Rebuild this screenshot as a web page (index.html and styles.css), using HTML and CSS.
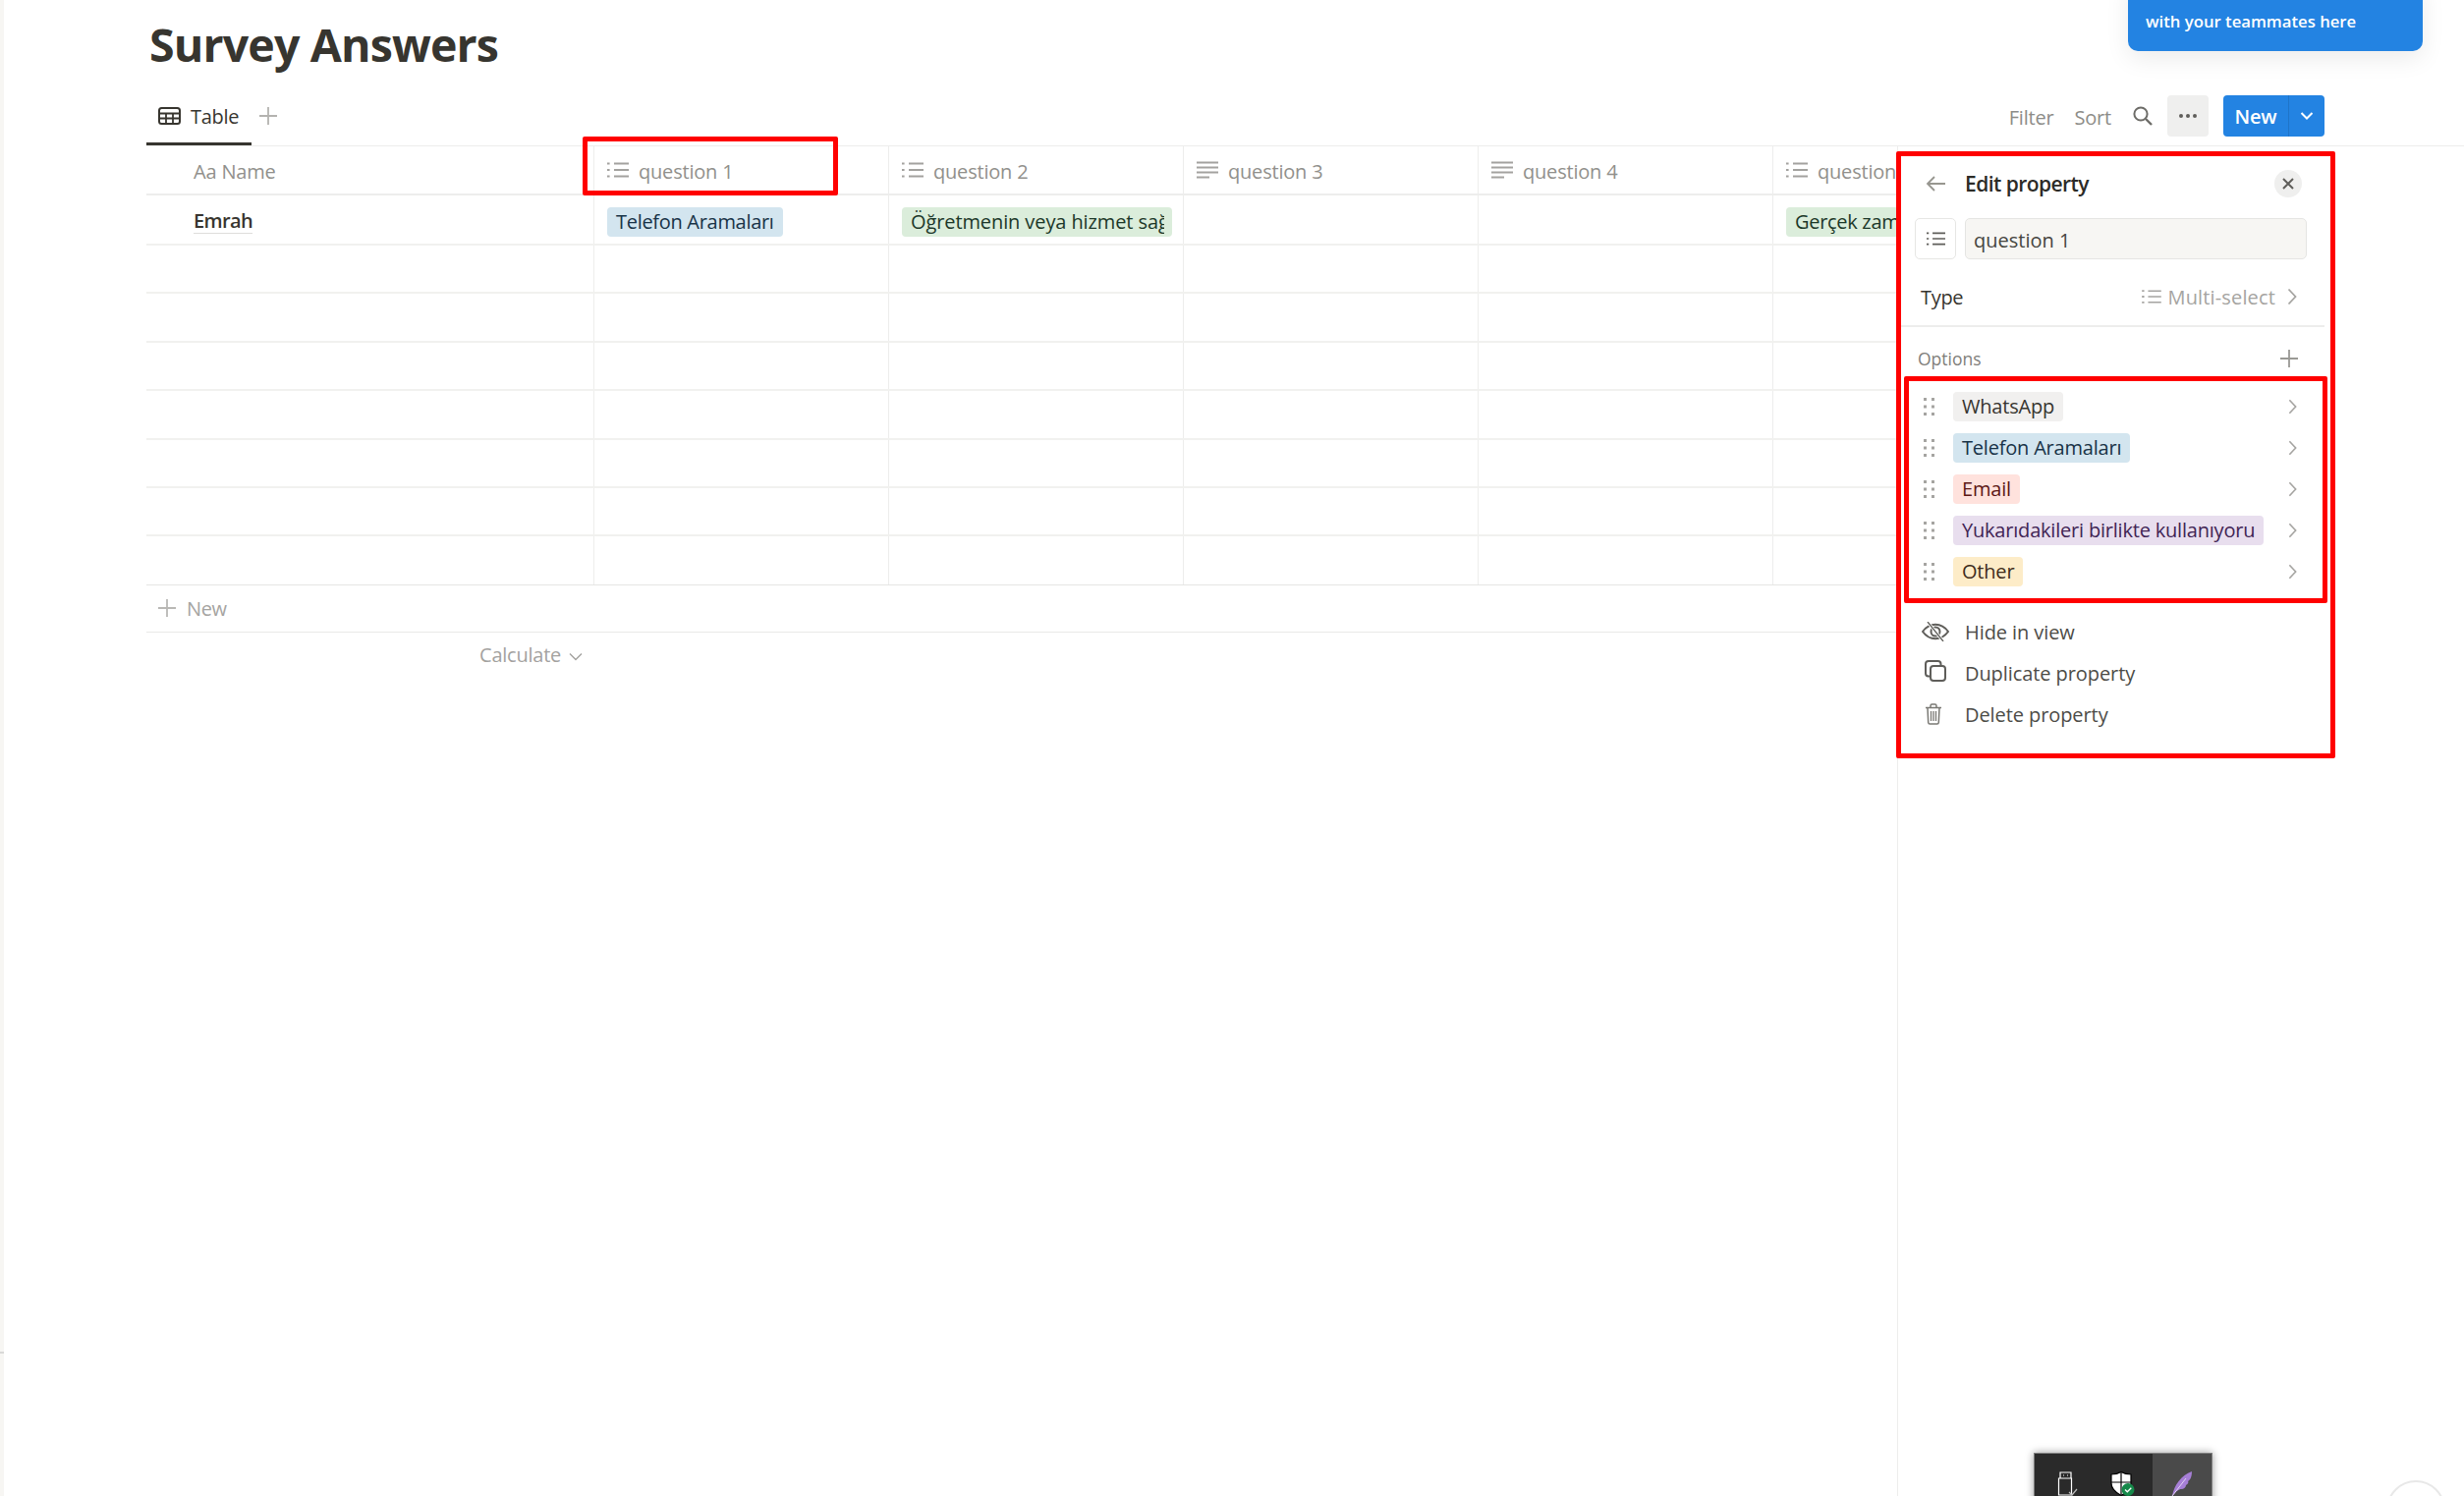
FILE: index.html
```html
<!DOCTYPE html>
<html lang="en">
<head>
<meta charset="utf-8">
<title>Survey Answers</title>
<link rel="stylesheet" href="styles.css">
</head>
<body>
<svg class="defs" width="0" height="0" aria-hidden="true">
  <defs>
    <symbol id="i-list" viewBox="0 0 22 18">
      <path d="M7 2.5h15M7 9h15M7 15.5h15" fill="none" stroke="currentColor" stroke-width="1.8"/>
      <path d="M0 1.5h2.6v2H0zM0 8h2.6v2H0zM0 14.5h2.6v2H0z" fill="currentColor"/>
    </symbol>
    <symbol id="i-text" viewBox="0 0 22 18">
      <path d="M0 1.5h22M0 6.5h22M0 11.5h22M0 16.5h13" fill="none" stroke="currentColor" stroke-width="2"/>
    </symbol>
    <symbol id="i-chev" viewBox="0 0 10 18">
      <path d="M1.5 1.5 8.5 9l-7 7.5" fill="none" stroke="currentColor" stroke-width="1.8"/>
    </symbol>
    <symbol id="i-dots" viewBox="0 0 11 18">
      <path d="M0 0h3v3H0zM8 0h3v3H8zM0 7.5h3v3H0zM8 7.5h3v3H8zM0 15h3v3H0zM8 15h3v3H8z" fill="currentColor"/>
    </symbol>
    <symbol id="i-plus" viewBox="0 0 18 18">
      <path d="M9 0v18M0 9h18" fill="none" stroke="currentColor" stroke-width="1.8"/>
    </symbol>
  </defs>
</svg>

<div class="shell">
  <aside class="rail"><span class="rail-tick"></span></aside>

  <main class="main">
    <h1 class="title">Survey Answers</h1>

    <div class="viewbar">
      <div class="tab">
        <svg class="tab-icon" viewBox="0 0 23 18"><rect x="1" y="1" width="21" height="16" rx="2.5" fill="none" stroke="currentColor" stroke-width="2"/><path d="M1 6.5h21M1 11.5h21M8 6v11M15 6v11" stroke="currentColor" stroke-width="1.8"/></svg>
        <span class="tab-label">Table</span>
      </div>
      <svg class="tab-plus"><use href="#i-plus"/></svg>
      <div class="tools">
        <span class="tool">Filter</span>
        <span class="tool">Sort</span>
        <svg class="search" viewBox="0 0 20 20"><circle cx="8" cy="8" r="6.6" fill="none" stroke="currentColor" stroke-width="2"/><path d="m13 13 6 6" stroke="currentColor" stroke-width="2.4"/></svg>
        <span class="more"><i></i><i></i><i></i></span>
        <span class="new">
          <span class="new-label">New</span>
          <span class="new-drop"><svg viewBox="0 0 14 10"><path d="m1.5 2 5.5 5.500L12.500 2" fill="none" stroke="currentColor" stroke-width="2"/></svg></span>
        </span>
      </div>
    </div>

    <div class="table">
      <div class="row head">
        <div class="cell name"><span class="aa">Aa</span> Name</div>
        <div class="cell"><svg class="col-icon"><use href="#i-list"/></svg>question 1</div>
        <div class="cell"><svg class="col-icon"><use href="#i-list"/></svg>question 2</div>
        <div class="cell"><svg class="col-icon"><use href="#i-text"/></svg>question 3</div>
        <div class="cell"><svg class="col-icon"><use href="#i-text"/></svg>question 4</div>
        <div class="cell"><svg class="col-icon"><use href="#i-list"/></svg>question 5</div>
      </div>
      <div class="row first">
        <div class="cell name"><span class="emrah">Emrah</span></div>
        <div class="cell tagcell"><span class="tag blue">Telefon Aramaları</span></div>
        <div class="cell tagcell"><span class="tag green wide"><span class="clip">Öğretmenin veya hizmet sağlayıcının</span></span></div>
        <div class="cell"></div>
        <div class="cell"></div>
        <div class="cell tagcell"><span class="tag green">Gerçek zamanlı</span></div>
      </div>
      <div class="row blank"><div class="cell name"></div><div class="cell"></div><div class="cell"></div><div class="cell"></div><div class="cell"></div><div class="cell"></div></div>
      <div class="row blank"><div class="cell name"></div><div class="cell"></div><div class="cell"></div><div class="cell"></div><div class="cell"></div><div class="cell"></div></div>
      <div class="row blank"><div class="cell name"></div><div class="cell"></div><div class="cell"></div><div class="cell"></div><div class="cell"></div><div class="cell"></div></div>
      <div class="row blank"><div class="cell name"></div><div class="cell"></div><div class="cell"></div><div class="cell"></div><div class="cell"></div><div class="cell"></div></div>
      <div class="row blank"><div class="cell name"></div><div class="cell"></div><div class="cell"></div><div class="cell"></div><div class="cell"></div><div class="cell"></div></div>
      <div class="row blank"><div class="cell name"></div><div class="cell"></div><div class="cell"></div><div class="cell"></div><div class="cell"></div><div class="cell"></div></div>
      <div class="row blank last"><div class="cell name"></div><div class="cell"></div><div class="cell"></div><div class="cell"></div><div class="cell"></div><div class="cell"></div></div>
      <div class="add-row"><svg class="add-plus"><use href="#i-plus"/></svg>New</div>
      <div class="calc-row">
        <div class="calc">Calculate <svg viewBox="0 0 14 9"><path d="m1 1.500 6 6 6-6" fill="none" stroke="currentColor" stroke-width="1.400"/></svg></div>
      </div>
    </div>
  </main>

  <section class="panel">
    <div class="p-head">
      <svg class="back" viewBox="0 0 20 16"><path d="M20 8H2M9 1 2 8l7 7" fill="none" stroke="currentColor" stroke-width="1.800"/></svg>
      <span class="p-title">Edit property</span>
      <span class="close"><svg viewBox="0 0 12 12"><path d="m1 1 10 10M11 1 1 11" stroke="currentColor" stroke-width="2"/></svg></span>
    </div>
    <div class="p-name">
      <span class="p-icon"><svg><use href="#i-list"/></svg></span>
      <span class="p-input">question 1</span>
    </div>
    <div class="p-type">
      <span>Type</span>
      <span class="p-type-val"><svg class="type-icon"><use href="#i-list"/></svg>Multi-select<svg class="type-chev"><use href="#i-chev"/></svg></span>
    </div>
    <div class="p-divider"></div>
    <div class="p-options">
      <span>Options</span>
      <svg class="opt-plus"><use href="#i-plus"/></svg>
    </div>
    <ul class="opts">
      <li class="opt"><svg class="drag"><use href="#i-dots"/></svg><span class="pill gray">WhatsApp</span><svg class="opt-chev"><use href="#i-chev"/></svg></li>
      <li class="opt"><svg class="drag"><use href="#i-dots"/></svg><span class="pill blue">Telefon Aramaları</span><svg class="opt-chev"><use href="#i-chev"/></svg></li>
      <li class="opt"><svg class="drag"><use href="#i-dots"/></svg><span class="pill red">Email</span><svg class="opt-chev"><use href="#i-chev"/></svg></li>
      <li class="opt"><svg class="drag"><use href="#i-dots"/></svg><span class="pill purple">Yukarıdakileri birlikte kullanıyoru</span><svg class="opt-chev"><use href="#i-chev"/></svg></li>
      <li class="opt"><svg class="drag"><use href="#i-dots"/></svg><span class="pill yellow">Other</span><svg class="opt-chev"><use href="#i-chev"/></svg></li>
    </ul>
    <ul class="acts">
      <li class="act">
        <svg viewBox="0 0 28 20"><path d="M1 10c3.500-4.800 8-7.200 13-7.200S23.500 5.200 27 10c-3.500 4.800-8 7.200-13 7.200S4.500 14.800 1 10Z" fill="none" stroke="currentColor" stroke-width="2"/><circle cx="14" cy="10" r="4.500" fill="none" stroke="currentColor" stroke-width="2"/><path d="m6 0 16 20" stroke="#fff" stroke-width="3"/><path d="m6 0 16 20" stroke="currentColor" stroke-width="1.300"/></svg>
        Hide in view
      </li>
      <li class="act">
        <svg class="copy" viewBox="0 0 22 22"><path d="M5 16.500H4a3 3 0 0 1-3-3V4a3 3 0 0 1 3-3h9.500a3 3 0 0 1 3 3v1" fill="none" stroke="currentColor" stroke-width="2"/><rect x="6" y="6" width="15" height="15" rx="3" fill="none" stroke="currentColor" stroke-width="2"/></svg>
        Duplicate property
      </li>
      <li class="act">
        <svg class="trash" viewBox="0 0 18 22"><path d="M1 4.500h16M6 4.500V2.500q0-1.500 1.500-1.500h3q1.500 0 1.500 1.500v2M3 4.500l.7 15q.1 1.500 1.600 1.500h7.400q1.500 0 1.600-1.500l.7-15" fill="none" stroke="currentColor" stroke-width="1.500"/><path d="M6.500 8v10M9 8v10M11.500 8v10" stroke="currentColor" stroke-width="1.300"/></svg>
        Delete property
      </li>
    </ul>
  </section>

  <div class="toast">
    <span class="toast-text">with your teammates here</span>
  </div>

  <div class="mark mark-col"></div>
  <div class="mark mark-panel"></div>
  <div class="mark mark-opts"></div>

  <div class="tray">
    <span class="tray-slot usb">
      <svg viewBox="0 0 20 26"><path d="M3 1h11v6H3zM1.500 7h13v17h-13z" fill="none" stroke="#fff" stroke-width="1.200"/><path d="M6 4h1M10 4h1" stroke="#fff"/><path d="m12 21 3 3 5-6" fill="none" stroke="#bbb" stroke-width="1.200"/></svg>
    </span>
    <span class="tray-slot">
      <svg viewBox="0 0 26 26"><path d="M1 3q6 0 10-2.500 4 2.500 10 2.500v9q0 7-10 12.500Q1 19 1 12Z" fill="#fff" stroke="#000" stroke-width="1.200"/><path d="M11 1v23M1 11h20" stroke="#000" stroke-width="1.200"/><circle cx="18" cy="18.500" r="6.500" fill="#16894a"/><path d="m15 18.500 2.300 2.300 4-4" fill="none" stroke="#fff" stroke-width="1.300"/></svg>
    </span>
    <span class="tray-slot active">
      <svg viewBox="0 0 22 26"><path d="M1 25C3 14 10 4 21 0c0 6-2 9-4 10 1 1 0 3-2 4 0 2-2 4-5 4-2 0-5 2-9 7Z" fill="#a67fd6"/><path d="M1 25 15 7" stroke="#e2d3f5" stroke-width="1"/></svg>
    </span>
  </div>

  <div class="help"></div>
</div>
</body>
</html>
```

FILE: styles.css
```css
* { box-sizing: border-box; }
html, body { margin: 0; padding: 0; height: 100%; overflow: hidden; background: #fff; }
body { font-family: "Open Sans", "Noto Sans", sans-serif; color: #37352f; font-size: 20px; }
ul { list-style: none; margin: 0; padding: 0; }
.defs { position: absolute; }

.shell { position: relative; display: flex; width: 2508px; height: 1523px; overflow: hidden; }
.rail { width: 4px; flex: none; background: #f7f6f3; position: relative; }
.rail-tick { position: absolute; left: 0; top: 1376px; width: 4px; height: 2px; background: #d9d9d7; }

.main { flex: 1; margin-left: 145px; min-width: 0; overflow: hidden; }
.title { margin: 0; height: 97px; padding-top: 15px; font-size: 46.500px; line-height: 60px; font-weight: 700; color: #37352f; letter-spacing: -0.850px; white-space: nowrap; margin-left: 3px; }

.viewbar { display: flex; align-items: center; height: 52px; border-bottom: 1px solid #ededec; position: relative; padding-bottom: 9px; padding-right: 142px; }
.tab { display: flex; align-items: center; gap: 10px; width: 107px; height: 51px; padding-left: 12px; padding-bottom: 7px; margin-bottom: -9px; border-bottom: 3px solid #37352f; font-size: 20px; font-weight: 500; letter-spacing: -0.300px; }
.tab-label { padding-top: 2px; }
.tab-icon { width: 23px; height: 18px; color: #37352f; flex: none; }
.tab-plus { width: 18px; height: 18px; color: #b4b3b0; margin-left: 8px; flex: none; }
.tools { margin-left: auto; display: flex; align-items: center; height: 42px; color: #8d8c88; font-size: 20px; letter-spacing: -0.200px; }
.tool { padding-top: 2px; }
.tool + .tool { margin-left: 21px; }
.search { width: 20px; height: 20px; margin-left: 22px; color: #6d6c68; flex: none; }
.more { width: 42px; height: 42px; margin-left: 15px; border-radius: 4px; background: #efefee; display: flex; align-items: center; justify-content: center; gap: 3px; }
.more i { width: 4px; height: 4px; border-radius: 50%; background: #5f5e5a; }
.new { display: flex; width: 103px; height: 42px; margin-left: 15px; border-radius: 4px; background: #2383e2; color: #fff; font-weight: 600; }
.new-label { width: 67px; display: flex; align-items: center; justify-content: center; border-right: 1px solid #1f74c9; padding-top: 1px; }
.new-drop { flex: 1; display: flex; align-items: center; justify-content: center; }
.new-drop svg { width: 14px; height: 10px; }

.table { width: 1900px; }
.row { display: flex; border-bottom: 2px solid #f1f1ef; }
.cell { width: 300px; flex: none; border-right: 1px solid #ededec; display: flex; align-items: center; padding-left: 13px; overflow: hidden; white-space: nowrap; }
.cell.name { width: 456px; padding-left: 48px; }
.head { height: 50px; border-bottom-color: #ededec; color: #91908c; font-size: 20px; letter-spacing: -0.200px; }
.head .cell { padding-top: 3px; }
.head .col-icon { margin-top: -3px; }
.aa { margin-right: 5px; }
.col-icon { width: 22px; height: 18px; margin-right: 10px; color: #a3a29f; flex: none; }
.first { height: 51px; }
.blank { height: 49.400px; }
.last { border-bottom-width: 1px; border-bottom-color: #e6e6e4; }
.emrah { font-weight: 600; font-size: 20px; letter-spacing: -0.600px; border-bottom: 1px solid #dedddb; line-height: 25px; margin-top: 3px; }
.tag, .pill { display: inline-block; height: 30px; line-height: 29px; padding: 0 9px; border-radius: 4px; white-space: nowrap; font-size: 20px; letter-spacing: -0.200px; }
.tag { letter-spacing: -0.300px; }
.tag.wide { width: 275px; padding-right: 8px; }
.clip { display: block; overflow: hidden; letter-spacing: -0.100px; }
.tagcell { padding-top: 5px; }
.blue { background: #d3e5ef; color: #183347; }
.green { background: #dbeddb; color: #1c3829; }
.gray { background: #f1f0ef; color: #37352f; }
.red { background: #ffe2dd; color: #5d1715; }
.purple { background: #e8deee; color: #412454; }
.yellow { background: #fdecc8; color: #402c1b; }

.add-row { display: flex; align-items: center; height: 48px; border-bottom: 1px solid #e9e9e7; padding-left: 12px; color: #a5a4a1; font-size: 20px; letter-spacing: -0.400px; }
.add-plus { width: 18px; height: 18px; margin-right: 11px; color: #b9b8b5; }
.calc-row { display: flex; height: 46px; width: 444px; justify-content: flex-end; align-items: center; }
.calc { display: flex; align-items: center; gap: 8px; color: #a3a29f; font-size: 20px; letter-spacing: -0.250px; }
.calc svg { width: 14px; height: 9px; margin-top: 3px; }

.panel { position: absolute; left: 1931px; top: 149px; right: 0; bottom: 0; background: #fff; border-left: 1px solid #ededec; padding-top: 20px; }
.p-head { display: flex; align-items: center; height: 36px; width: 435px; }
.back { width: 20px; height: 16px; margin-left: 28px; color: #97968f; flex: none; }
.p-title { margin-left: 20px; font-size: 21px; font-weight: 600; color: #2c2b27; letter-spacing: -0.550px; }
.close { margin-left: auto; margin-right: 24px; width: 28px; height: 28px; border-radius: 50%; background: #efefee; display: flex; align-items: center; justify-content: center; color: #5f5e5a; }
.close svg { width: 12px; height: 12px; }
.p-name { display: flex; gap: 9px; margin-top: 17px; margin-left: 17px; height: 42px; }
.p-icon { width: 42px; height: 42px; border: 1px solid #e6e6e4; border-radius: 5px; display: flex; align-items: center; justify-content: center; color: #5f5e5a; }
.p-icon svg { width: 19px; height: 16px; }
.p-input { width: 348px; height: 42px; background: #f7f6f3; border: 1px solid #e5e5e3; border-radius: 5px; padding-left: 8px; line-height: 43px; color: #46453f; }
.p-type { display: flex; align-items: center; justify-content: space-between; height: 40px; margin-top: 18px; margin-left: 23px; width: 384px; color: #37352f; letter-spacing: -0.300px; }
.p-type-val { display: flex; align-items: center; color: #a5a4a1; letter-spacing: 0.150px; }
.type-icon { width: 22px; height: 16px; margin-right: 6px; color: #a5a4a1; }
.type-chev { width: 10px; height: 18px; margin-left: 12px; margin-right: 1px; color: #a5a4a1; }
.p-divider { height: 2px; width: 431px; margin-top: 9px; margin-left: 3px; background: #ededec; }
.p-options { display: flex; align-items: center; justify-content: space-between; height: 36px; margin-top: 14px; margin-left: 20px; width: 387px; color: #7f7e7a; font-size: 17.500px; }
.opt-plus { width: 18px; height: 18px; color: #9a9995; }
.opts { margin-top: 10px; width: 435px; }
.opt { display: flex; align-items: center; height: 42px; position: relative; }
.drag { width: 11px; height: 18px; margin-left: 26px; margin-right: 19px; color: #a5a4a1; flex: none; }
.opt-chev { width: 9px; height: 18px; color: #a5a4a1; margin-left: auto; margin-right: 29px; flex: none; }
.acts { margin-top: 19px; }
.act { display: flex; align-items: center; height: 42.300px; padding-left: 68px; position: relative; color: #4d4c47; letter-spacing: -0.080px; }
.act svg { position: absolute; left: 24px; top: 50%; transform: translateY(-50%); width: 28px; height: 20px; color: #5f5e5a; }
.act .copy { left: 27px; width: 22px; height: 22px; margin-top: -2px; }
.act .trash { left: 27px; width: 18px; height: 22px; color: #7a7974; margin-top: -1px; }

.toast { position: absolute; left: 2166px; top: -20px; width: 300px; height: 72px; background: #2383e2; border-radius: 0 0 10px 10px; box-shadow: 0 8px 24px rgba(15,15,15,.08); color: #fff; padding: 31px 18px 0; font-size: 16.700px; font-weight: 600; line-height: 21px; }
.toast-text { white-space: nowrap; }

.mark { position: absolute; border: 5px solid #f00; border-radius: 2px; }
.mark-col { left: 593px; top: 139px; width: 260px; height: 60px; }
.mark-panel { left: 1930px; top: 154px; width: 447px; height: 618px; }
.mark-opts { left: 1938px; top: 383px; width: 431px; height: 231px; }

.tray { position: absolute; left: 2070px; top: 1479px; width: 182px; height: 60px; display: flex; background: #2a2a2a; border: 1px solid #7d7d7d; box-shadow: 0 0 8px rgba(0,0,0,.4); }
.tray-slot { width: 60px; display: flex; justify-content: center; padding-top: 18px; }
.tray-slot.usb { padding-left: 6px; }
.tray-slot svg { width: 26px; height: 26px; }
.tray-slot.active { background: #4a4a4a; }
.help { position: absolute; left: 2429px; top: 1507px; width: 60px; height: 60px; border: 2px solid #e8e8e8; border-radius: 50%; background: #fff; }
```
